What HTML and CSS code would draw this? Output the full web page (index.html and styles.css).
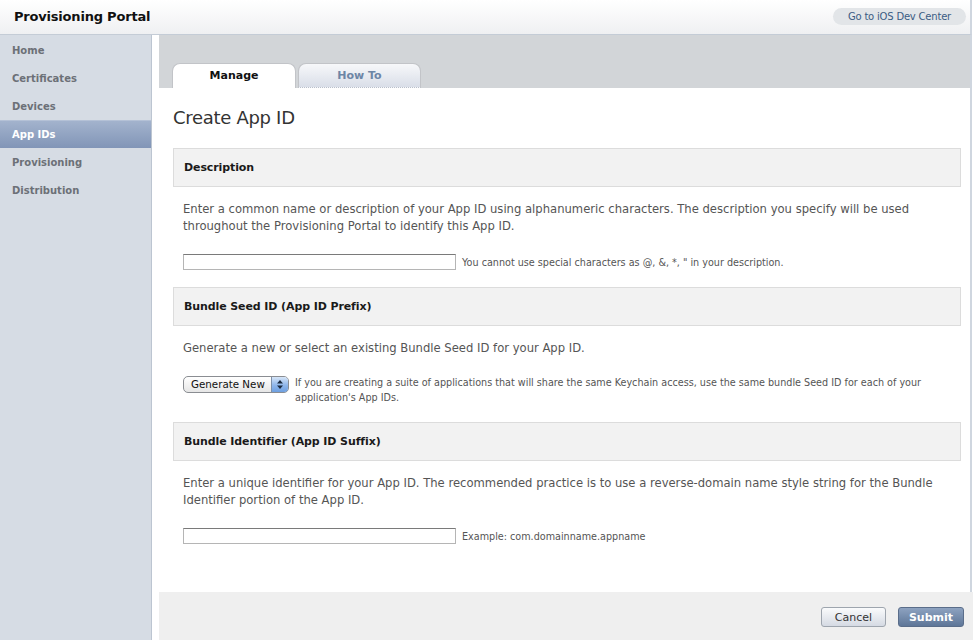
FILE: index.html
```html
<!DOCTYPE html>
<html>
<head>
<meta charset="utf-8">
<title>Provisioning Portal</title>
<link rel="stylesheet" href="styles.css">
</head>
<body>
<header class="topbar">
  <div class="brand">Provisioning Portal</div>
  <a class="devcenter" href="#">Go to iOS Dev Center</a>
</header>
<div class="layout">
  <nav class="sidebar">
    <a class="nav-item" href="#">Home</a>
    <a class="nav-item" href="#">Certificates</a>
    <a class="nav-item" href="#">Devices</a>
    <a class="nav-item active" href="#">App IDs</a>
    <a class="nav-item" href="#">Provisioning</a>
    <a class="nav-item" href="#">Distribution</a>
  </nav>
  <main class="main">
    <div class="column">
      <div class="tabbar">
        <div class="tab tab-active">Manage</div>
        <div class="tab tab-inactive">How To</div>
      </div>
      <div class="content">
        <h1 class="page-title">Create App ID</h1>

        <section class="section">
          <h2 class="section-head">Description</h2>
          <p class="section-text">Enter a common name or description of your App ID using alphanumeric characters. The description you specify will be used throughout the Provisioning Portal to identify this App ID.</p>
          <div class="control-row">
            <input class="text-input" type="text">
            <span class="hint">You cannot use special characters as @, &amp;, *, " in your description.</span>
          </div>
        </section>

        <section class="section">
          <h2 class="section-head">Bundle Seed ID (App ID Prefix)</h2>
          <p class="section-text">Generate a new or select an existing Bundle Seed ID for your App ID.</p>
          <div class="control-row top">
            <div class="select">
              <span class="select-label">Generate New</span>
              <span class="select-arrows">
                <svg width="8" height="11" viewBox="0 0 8 11"><path d="M1 4.5 L4 1 L7 4.5 Z M1 6.5 L4 10 L7 6.5 Z" fill="#1b2a3f"/></svg>
              </span>
            </div>
            <span class="hint hint-wrap">If you are creating a suite of applications that will share the same Keychain access, use the same bundle Seed ID for each of your application's App IDs.</span>
          </div>
        </section>

        <section class="section">
          <h2 class="section-head">Bundle Identifier (App ID Suffix)</h2>
          <p class="section-text">Enter a unique identifier for your App ID. The recommended practice is to use a reverse-domain name style string for the Bundle Identifier portion of the App ID.</p>
          <div class="control-row">
            <input class="text-input" type="text">
            <span class="hint">Example: com.domainname.appname</span>
          </div>
        </section>
      </div>
    </div>
    <footer class="actions">
      <button class="btn btn-cancel">Cancel</button>
      <button class="btn btn-submit">Submit</button>
    </footer>
  </main>
</div>
</body>
</html>
```

FILE: styles.css
```css
* { box-sizing: border-box; }
html, body { margin: 0; padding: 0; }
body {
  width: 973px;
  height: 640px;
  overflow: hidden;
  background: #fff;
  font-family: "DejaVu Sans", "Liberation Sans", sans-serif;
  color: #333;
  display: flex;
  flex-direction: column;
}
.topbar {
  width: 972px;
  height: 35px;
  flex: none;
  display: flex;
  align-items: center;
  justify-content: space-between;
  padding: 0 4px 1px 14px;
  background: linear-gradient(#ffffff, #eff0f2);
  border-bottom: 1px solid #c4ccd6;
  border-right: 2px solid #cfd6df;
}
.brand {
  font-weight: bold;
  font-size: 13px;
  color: #111;
  letter-spacing: -0.2px;
}
.devcenter {
  display: block;
  height: 17px;
  line-height: 17px;
  padding: 0 15px;
  border-radius: 9px;
  background: #e2e5e8;
  color: #3b5c84;
  font-size: 10px;
  letter-spacing: -0.2px;
  text-decoration: none;
}
.layout {
  flex: 1;
  display: flex;
  min-height: 0;
}
.sidebar {
  width: 152px;
  flex: none;
  background: #d6dce4;
  border-right: 1px solid #bcc5d1;
  padding-top: 1px;
  display: flex;
  flex-direction: column;
}
.nav-item {
  display: block;
  height: 28px;
  line-height: 29px;
  padding-left: 12px;
  font-size: 10px;
  font-weight: bold;
  color: #6c7077;
  text-decoration: none;
}
.nav-item.active {
  background: linear-gradient(#a3b3cd, #8195b7);
  border-top: 1px solid #b4c1d6;
  line-height: 27px;
  color: #fff;
}
.main {
  flex: 1;
  display: flex;
  flex-direction: column;
  padding-left: 7px;
  min-width: 0;
}
.column {
  flex: 1;
  width: 813px;
  border-right: 2px solid #cfd6df;
  display: flex;
  flex-direction: column;
}
.tabbar {
  height: 53px;
  flex: none;
  background: #d2d5d8;
  display: flex;
  align-items: flex-end;
  padding-left: 13px;
}
.tab {
  height: 25px;
  line-height: 24px;
  text-align: center;
  font-size: 11px;
  font-weight: bold;
  border: 1px solid #c2c4c8;
  border-bottom: none;
  border-radius: 8px 8px 0 0;
}
.tab-active {
  width: 124px;
  background: #fff;
  color: #111;
}
.tab-inactive {
  width: 123px;
  margin-left: 2px;
  background: linear-gradient(#f7f8fa, #d9dee8);
  color: #6d86a6;
  border-bottom: 1px dotted #b9c0cc;
}
.content {
  flex: 1;
  padding: 0 9px 0 14px;
}
.page-title {
  margin: 18px 0 18px;
  font-size: 18px;
  letter-spacing: -0.3px;
  line-height: 24px;
  font-weight: normal;
  color: #333;
}
.section { margin-bottom: 17px; }
.section-head {
  margin: 0;
  height: 39px;
  line-height: 38px;
  padding-left: 10px;
  background: #f2f2f2;
  border: 1px solid #dcdcdc;
  font-size: 11px;
  letter-spacing: -0.1px;
  font-weight: bold;
  color: #1a1a1a;
}
.section-text {
  margin: 14px 0 19px;
  padding-left: 10px;
  font-size: 11.6px;
  line-height: 17px;
  color: #555;
}
.control-row {
  display: flex;
  align-items: center;
  padding-left: 10px;
}
.control-row.top { align-items: flex-start; }
.text-input {
  width: 273px;
  height: 16px;
  margin: 0;
  padding: 0;
  border: 1px solid #b5b5b5;
  border-top-color: #7a7a7a;
  background: #fff;
  flex: none;
}
.hint {
  margin-left: 6px;
  font-size: 9.65px;
  line-height: 15px;
  color: #555;
}
.hint-wrap { margin-top: -1px; }
.select {
  flex: none;
  width: 106px;
  height: 17px;
  display: flex;
  border: 1px solid #8a8d92;
  border-radius: 5px;
  overflow: hidden;
  background: linear-gradient(#ffffff, #e6e6e6);
}
.select-label {
  flex: 1;
  padding-left: 7px;
  font-size: 10.3px;
  line-height: 15px;
  color: #111;
  white-space: nowrap;
}
.select-arrows {
  width: 17px;
  flex: none;
  display: flex;
  align-items: center;
  justify-content: center;
  border-left: 1px solid #7d8fa8;
  background: linear-gradient(#d7e6f8, #8fb6ea 55%, #6d9fe0);
}
.actions {
  height: 48px;
  flex: none;
  background: #efefef;
  display: flex;
  justify-content: flex-end;
  align-items: flex-start;
  padding: 15px 9px 0 0;
  gap: 12px;
}
.btn {
  height: 20px;
  margin: 0;
  padding: 0;
  font-family: inherit;
  font-size: 11px;
  border-radius: 3px;
}
.btn-cancel {
  width: 65px;
  background: linear-gradient(#fafbfc, #d5dae3);
  border: 1px solid #9ea5ae;
  color: #333;
}
.btn-submit {
  width: 66px;
  background: linear-gradient(#8da2c0, #5e7698);
  border: 1px solid #5a6d8a;
  color: #fff;
  font-weight: bold;
}
```
